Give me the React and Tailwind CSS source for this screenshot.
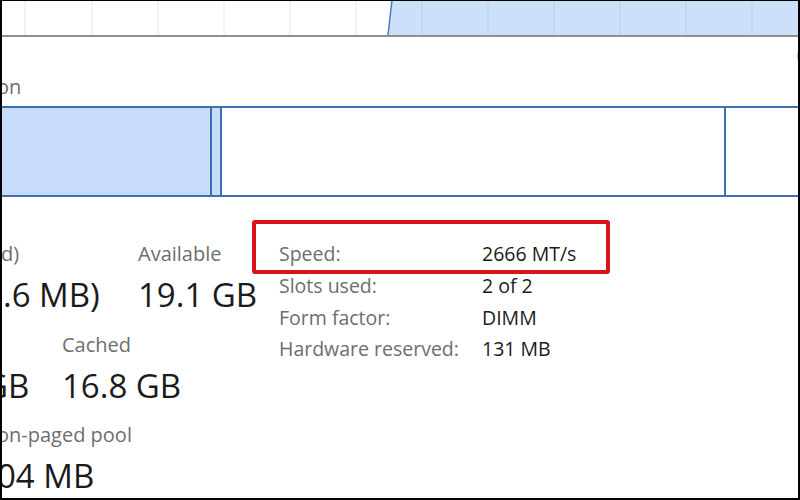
import React from 'react';

const gridX = [25, 92, 158, 224, 290, 356, 422, 488, 554, 620, 686, 752];

function UsageChart() {
  return (
    <svg width="800" height="35" className="block">
      {gridX.map((x) => (
        <line key={x} x1={x} y1="0" x2={x} y2="35" stroke="#e6e6e6" strokeWidth="1" />
      ))}
      <polygon points="392,0 800,0 800,35 388,35" fill="#c8ddf8" fillOpacity="0.9" />
      {gridX.filter((x) => x > 392).map((x) => (
        <line key={'b' + x} x1={x} y1="0" x2={x} y2="35" stroke="#b8cfec" strokeWidth="1" />
      ))}
      <line x1="392" y1="0" x2="388" y2="35" stroke="#4a7cc0" strokeWidth="1.5" />
    </svg>
  );
}

function Stat({ label, value, className = '', valueClass = '' }) {
  return (
    <div className={'flex flex-col shrink-0 ' + className}>
      <span className="text-[20px] leading-[28px] text-[#6e6e6e] whitespace-nowrap">{label}</span>
      <span className={'text-[33px] leading-[54px] text-[#1b1b1b] whitespace-nowrap ' + valueClass}>{value}</span>
    </div>
  );
}

function App() {
  const details = [
    ['Speed:', '2666 MT/s'],
    ['Slots used:', '2 of 2'],
    ['Form factor:', 'DIMM'],
    ['Hardware reserved:', '131 MB'],
  ];

  return (
    <div className="w-[800px] h-[500px] bg-white relative overflow-hidden font-['Open_Sans',sans-serif]">
      <div className="absolute inset-0 border-l-2 border-t border-r-2 border-b-2 border-black pointer-events-none z-10" />

      {/* usage graph */}
      <div className="border-b-2 border-[#8e8e8e]">
        <UsageChart />
      </div>

      {/* axis labels */}
      <div className="h-[69px] flex flex-col justify-between">
        <div className="text-right pt-[7px] text-[20px] leading-[24px] text-[#6e6e6e] -mr-[8px]">0</div>
        <div className="text-[20px] leading-[26px] text-[#6e6e6e] -ml-[3px] pb-[6px]">on</div>
      </div>

      {/* memory composition */}
      <div className="h-[91px] flex border-t-2 border-b-2 border-[#3e6fb3]">
        <div className="w-[212px] bg-[#c6dcf8] border-r-2 border-[#3e6fb3]" />
        <div className="w-[8px] bg-[#c6dcf8]" />
        <div className="w-[506px] border-l-2 border-r-2 border-[#3e6fb3]" />
        <div className="flex-1" />
      </div>

      {/* stats */}
      <div className="flex pt-[43px]">
        <div className="w-[279px] shrink-0 overflow-hidden flex flex-col gap-[9px]">
          <div className="flex">
            <Stat label="d)" value=".6 MB)" className="w-[138px] ml-[1px]" valueClass="pl-[2px]" />
            <Stat label="Available" value="19.1 GB" className="-ml-[1px]" />
          </div>
          <div className="flex">
            <Stat label={'\u00a0'} value="GB" className="w-[79px] -ml-[16px]" />
            <Stat label="Cached" value="16.8 GB" className="-ml-[1px]" />
          </div>
          <div className="flex -mt-[1px]">
            <Stat label="on-paged pool" value="04 MB" className="-ml-[3px]" />
          </div>
        </div>

        <div className="flex flex-col -mt-[2px]">
          {details.map(([k, v]) => (
            <div key={k} className="flex h-[31.7px] items-center text-[19.5px]">
              <span className="w-[203px] shrink-0 text-[#6e6e6e] whitespace-nowrap">{k}</span>
              <span className="text-[#1b1b1b] whitespace-nowrap">{v}</span>
            </div>
          ))}
        </div>
      </div>

      {/* highlight annotation */}
      <div className="absolute left-[252px] top-[220px] w-[358px] h-[54px] border-[4px] border-[#d8131c] rounded-[3px]" />
    </div>
  );
}

export default App;
